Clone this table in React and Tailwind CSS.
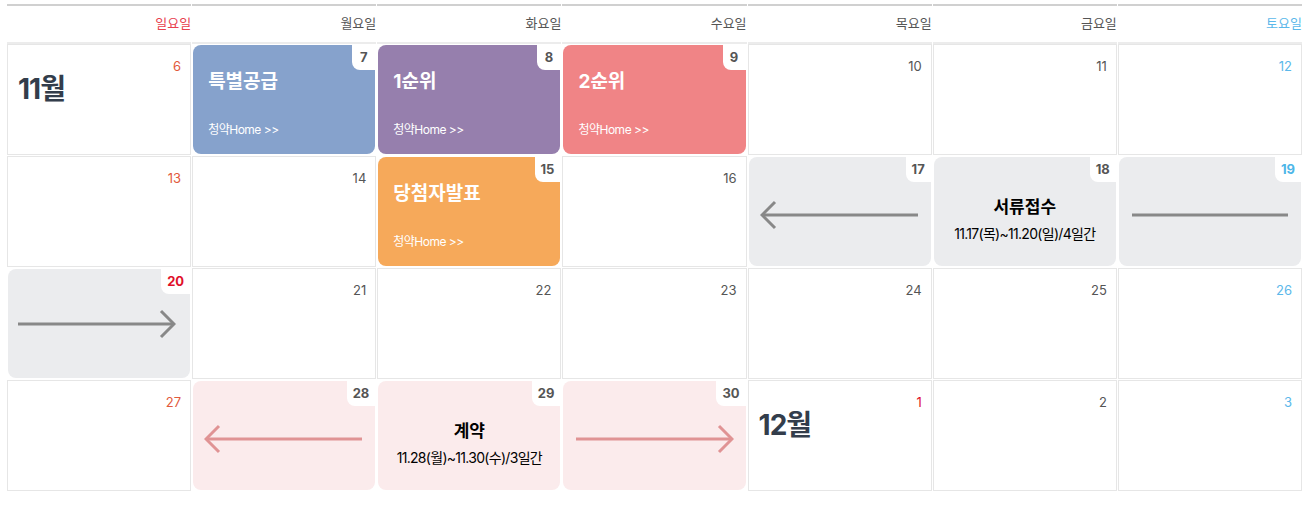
const FONT = "font-['Inter','Noto_Sans_CJK_KR',sans-serif]";

const days = [
  { label: "일요일", color: "text-[#e8414f]" },
  { label: "월요일", color: "text-[#555]" },
  { label: "화요일", color: "text-[#555]" },
  { label: "수요일", color: "text-[#555]" },
  { label: "목요일", color: "text-[#555]" },
  { label: "금요일", color: "text-[#555]" },
  { label: "토요일", color: "text-[#5bb8ea]" },
];

const weeks = [
  [
    { d: 6, month: "11월", color: "text-[#e25a3c]" },
    { d: 7, type: "event", bg: "bg-[#86a2cc]", title: "특별공급" },
    { d: 8, type: "event", bg: "bg-[#967fad]", title: "1순위" },
    { d: 9, type: "event", bg: "bg-[#f08486]", title: "2순위" },
    { d: 10 },
    { d: 11 },
    { d: 12, color: "text-[#5bb8ea]" },
  ],
  [
    { d: 13, color: "text-[#e25a3c]" },
    { d: 14 },
    { d: 15, type: "event", bg: "bg-[#f6a95a]", title: "당첨자발표" },
    { d: 16 },
    { d: 17, type: "range", bg: "bg-[#ebecee]", arrow: "left", stroke: "#888" },
    {
      d: 18,
      type: "range",
      bg: "bg-[#ebecee]",
      title: "서류접수",
      sub: "11.17(목)~11.20(일)/4일간",
    },
    { d: 19, type: "range", bg: "bg-[#ebecee]", arrow: "line", stroke: "#888", badge: "text-[#4db6e8]" },
  ],
  [
    { d: 20, type: "range", bg: "bg-[#ebecee]", arrow: "right", stroke: "#888", badge: "text-[#e0102a]" },
    { d: 21 },
    { d: 22 },
    { d: 23 },
    { d: 24 },
    { d: 25 },
    { d: 26, color: "text-[#5bb8ea]" },
  ],
  [
    { d: 27, color: "text-[#e25a3c]" },
    { d: 28, type: "range", bg: "bg-[#fbebec]", arrow: "left", stroke: "#e09394" },
    {
      d: 29,
      type: "range",
      bg: "bg-[#fbebec]",
      title: "계약",
      sub: "11.28(월)~11.30(수)/3일간",
    },
    { d: 30, type: "range", bg: "bg-[#fbebec]", arrow: "right", stroke: "#e09394" },
    { d: 1, month: "12월", color: "text-[#e0102a]" },
    { d: 2 },
    { d: 3, color: "text-[#5bb8ea]" },
  ],
];

function Arrow({ dir, stroke }) {
  return (
    <svg width="160" height="32" viewBox="0 0 160 32" fill="none">
      <line x1="2" y1="16" x2="158" y2="16" stroke={stroke} strokeWidth="3" />
      {dir === "left" && (
        <polyline points="15,3 2,16 15,29" stroke={stroke} strokeWidth="3" fill="none" />
      )}
      {dir === "right" && (
        <polyline points="145,3 158,16 145,29" stroke={stroke} strokeWidth="3" fill="none" />
      )}
    </svg>
  );
}

function Badge({ d, color = "text-[#555]" }) {
  return (
    <span
      className={`absolute right-0 top-0 flex h-[25px] min-w-[23px] items-center justify-center rounded-bl-[8px] bg-white px-[6px] text-[13px] font-bold ${color}`}
    >
      {d}
    </span>
  );
}

function Cell({ cell }) {
  if (cell.type === "event") {
    return (
      <div className="h-[111px] p-[1px]">
        <div className={`relative flex h-full flex-col rounded-[8px] px-[15px] ${cell.bg}`}>
          <Badge d={cell.d} />
          <p className="mt-[23px] text-[19px] font-bold text-white">{cell.title}</p>
          <p className="mt-auto mb-[15px] text-[12px] tracking-[-0.5px] text-white">
            청약Home &gt;&gt;
          </p>
        </div>
      </div>
    );
  }

  if (cell.type === "range") {
    return (
      <div className="h-[111px] p-[1px]">
        <div
          className={`relative flex h-full flex-col items-center justify-center rounded-[8px] ${cell.bg}`}
        >
          <Badge d={cell.d} color={cell.badge} />
          {cell.arrow ? (
            <div className={cell.d === 20 ? "mt-0 -ml-[6px]" : "mt-[6px]"}>
              <Arrow dir={cell.arrow} stroke={cell.stroke} />
            </div>
          ) : (
            <div className="mt-[16px] flex flex-col items-center">
              <p className="text-[17px] font-bold text-black">{cell.title}</p>
              <p className="mt-[2px] text-[14px] tracking-[-0.7px] text-black">{cell.sub}</p>
            </div>
          )}
        </div>
      </div>
    );
  }

  return (
    <div className="relative h-[111px] border border-[#e6e6e6]">
      <span
        className={`absolute right-[9px] top-[12px] text-[13px] ${cell.color || "text-[#555]"}`}
      >
        {cell.d}
      </span>
      {cell.month && (
        <p className="absolute left-[10px] top-[23px] text-[28px] font-bold tracking-[-1px] text-[#333d4b]">
          {cell.month}
        </p>
      )}
    </div>
  );
}

export default function App() {
  return (
    <div className={`min-h-[512px] bg-white pl-[7px] pt-[4px] ${FONT}`}>
      <div className="w-[1295px]">
        <div className="grid grid-cols-7 gap-x-[1px]">
          {days.map((day) => (
            <div
              key={day.label}
              className={`flex h-[40px] items-center justify-end border-t-2 border-b-2 border-t-[#d0d0d0] border-b-[#ececec] text-[13px] ${day.color}`}
            >
              {day.label}
            </div>
          ))}
        </div>
        <div className="grid grid-cols-7 gap-[1px]">
          {weeks.flat().map((cell, index) => (
            <Cell key={index} cell={cell} />
          ))}
        </div>
      </div>
    </div>
  );
}
